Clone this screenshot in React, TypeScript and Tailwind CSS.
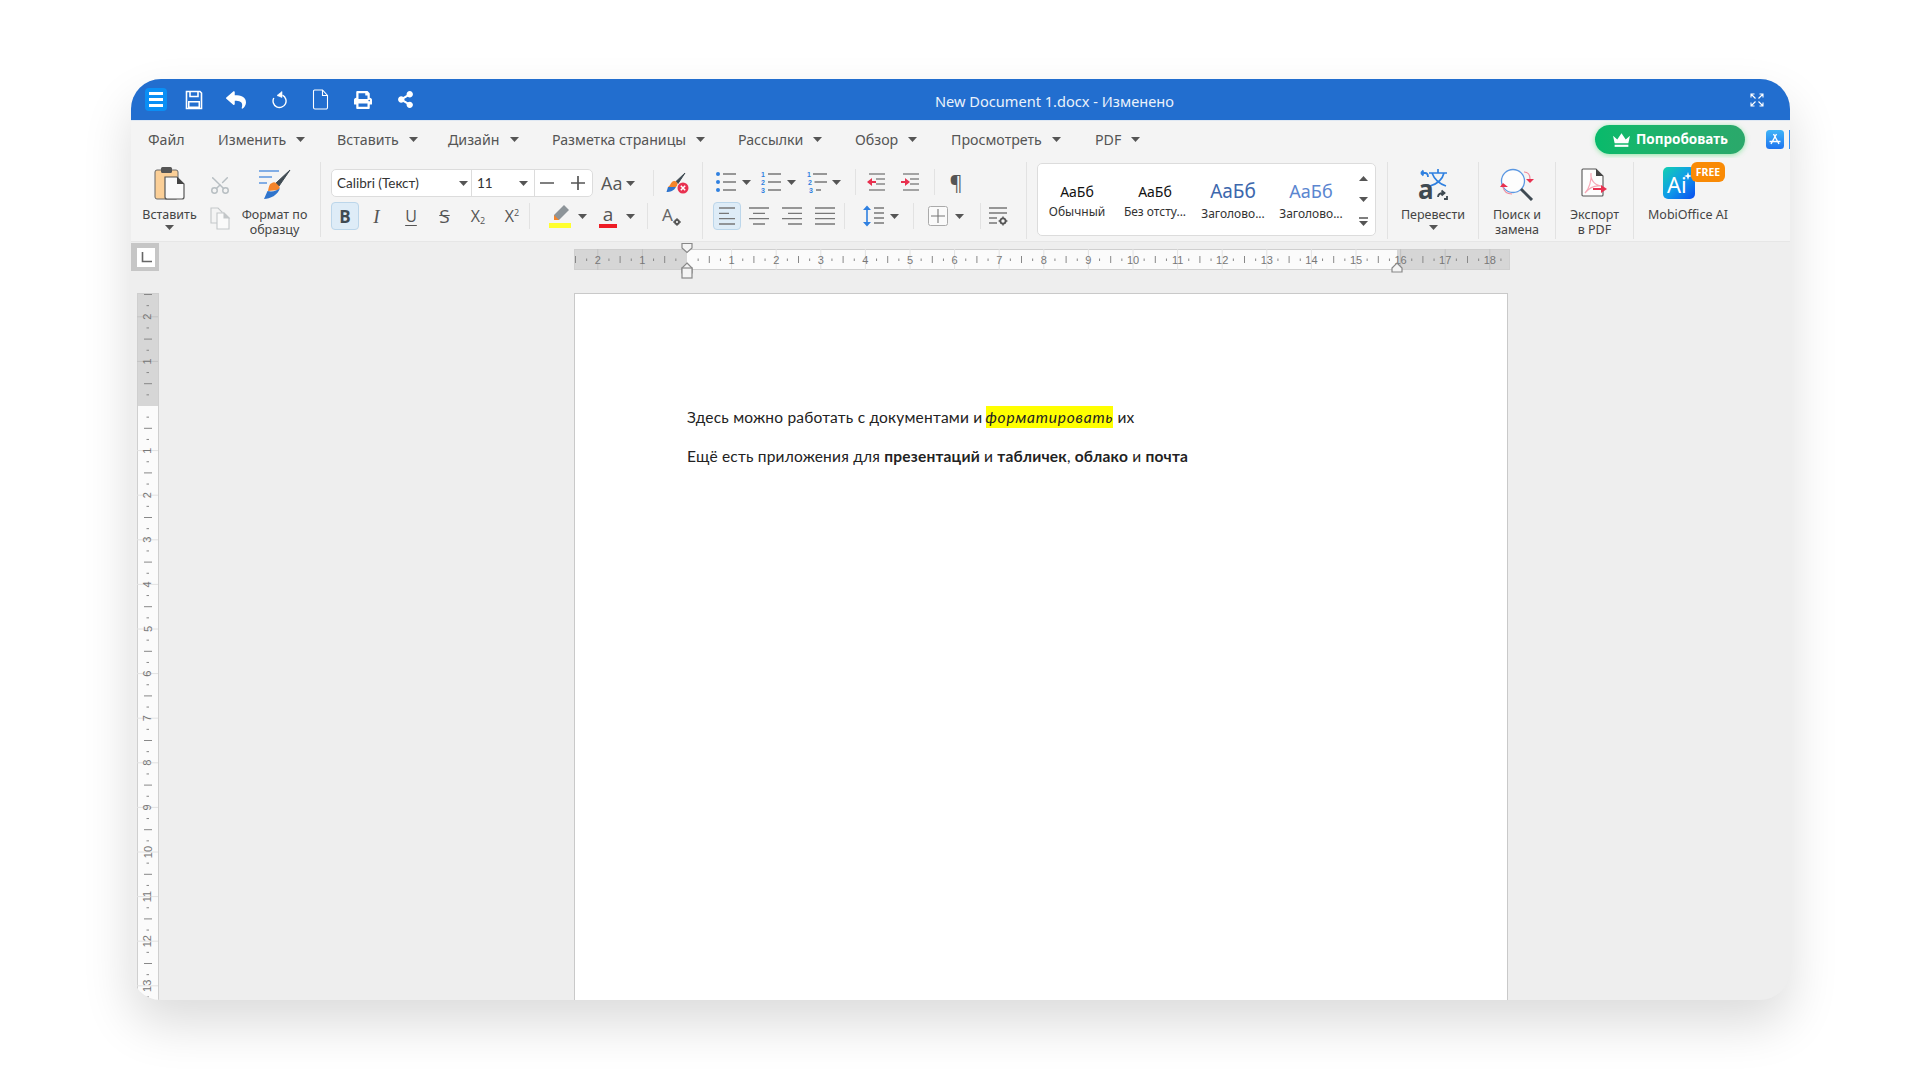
import React from "react";
import { FaReply, FaShareAlt, FaPrint } from "react-icons/fa";
import { Scissors } from "lucide-react";

const Caret = ({ className = "" }: { className?: string }) => (
  <svg width="9" height="5" viewBox="0 0 9 5" className={"shrink-0 " + className}>
    <polygon points="0,0 9,0 4.5,5" fill="#555" />
  </svg>
);
const Sep = ({ className = "" }: { className?: string }) => <div className={"w-px bg-[#e2e2e2] shrink-0 " + className} />;
const Cell = ({ className = "", children }: { className?: string; children?: React.ReactNode }) => (
  <div className={"flex items-center justify-center shrink-0 " + className}>{children}</div>
);

const Save = () => (
  <svg width="18" height="20" viewBox="0 0 18 20" fill="none" stroke="#fff" strokeWidth="1.6">
    <path d="M1.5 1.5H15L16.5 3V18.5H1.5Z" />
    <path d="M5 1.5V6.5H13V1.5" />
    <rect x="3" y="11" width="12" height="7" fill="#fff" stroke="none" />
    <rect x="4.5" y="12.5" width="9" height="4" fill="#226ecf" stroke="none" />
  </svg>
);
const Redo = () => (
  <svg width="18" height="20" viewBox="0 0 18 20" fill="none" stroke="#fff" strokeWidth="1.4">
    <path d="M13.5 5.2A6.5 6.5 0 1 1 4.8 8" />
    <path d="M13 1.5V7.5L8 5.5Z" fill="#fff" stroke="#fff" strokeWidth="0.6" />
  </svg>
);
const NewDoc = () => (
  <svg width="17" height="21" viewBox="0 0 17 21" fill="none" stroke="#fff" strokeWidth="1.1">
    <path d="M2.5 1H10.5L15.5 6.5V18.5A1.5 1.5 0 0 1 14 20H3A1.5 1.5 0 0 1 1.5 18.5V2A1 1 0 0 1 2.5 1Z" />
    <path d="M10.5 1V6.5H15.5" />
  </svg>
);
const Expand = () => (
  <svg width="14" height="14" viewBox="0 0 14 14" fill="none" stroke="#fff" strokeWidth="1.1">
    <path d="M1 4.5V1H4.5M1 1L5.5 5.5M9.5 1H13V4.5M13 1L8.5 5.5M1 9.5V13H4.5M1 13L5.5 8.5M13 9.5V13H9.5M13 13L8.5 8.5" />
  </svg>
);
const Crown = () => (
  <svg width="19" height="16" viewBox="0 0 18 15" fill="#fff">
    <path d="M1 3.5L5 7L9 1L13 7L17 3.5L15.5 10.5H2.5Z" />
    <rect x="2.5" y="12" width="13" height="2" />
  </svg>
);
const AppStore = () => (
  <svg width="18" height="19" viewBox="0 0 18 19">
    <defs>
      <linearGradient id="as" x1="0" y1="0" x2="0" y2="1">
        <stop offset="0" stopColor="#3fb4f8" />
        <stop offset="1" stopColor="#1f74ee" />
      </linearGradient>
    </defs>
    <rect width="18" height="19" rx="3.5" fill="url(#as)" />
    <path d="M10.5 4L5 14M7.5 4L13 14M3.5 11.5H14.5" stroke="#fff" strokeWidth="1.4" fill="none" />
  </svg>
);
const Paste = () => (
  <svg width="31" height="34" viewBox="0 0 31 34">
    <rect x="1" y="4" width="23" height="29" rx="2" fill="#fbcf97" stroke="#666" strokeWidth="1" />
    <rect x="7" y="1" width="11" height="6" rx="1.5" fill="#555" />
    <path d="M11 11H23L30 18V31A2 2 0 0 1 28 33H13A2 2 0 0 1 11 31Z" fill="#fafafa" stroke="#555" strokeWidth="1.2" />
    <path d="M23 11V18H30Z" fill="#444" />
  </svg>
);
const Copy = () => (
  <svg width="22" height="24" viewBox="0 0 22 24" fill="none" stroke="#c3c7c9" strokeWidth="1.1">
    <path d="M2 2H9L13 6V17H2Z" fill="#f4f4f4" />
    <path d="M8 7H15L20 12V23H8Z" fill="#fafafa" />
    <path d="M15 7V12H20Z" fill="#c3c7c9" />
  </svg>
);
const Painter = () => (
  <svg width="34" height="32" viewBox="0 0 34 32">
    <path d="M1 3H21M1 9H14M1 15H9" stroke="#5b95e0" strokeWidth="1.4" />
    <path d="M32 2L18 15L21 18Z" fill="#3f4a52" stroke="#3f4a52" strokeWidth="1" />
    <path d="M14 15C11 16 11 19 10 23L20 22C22 20 22 19 21 18L18 15C17 14 15 14 14 15Z" fill="#f5842a" />
    <path d="M9.5 23L6 31C12 31 20 27 22 20C19 23 14 24 9.5 23Z" fill="#2f74cc" />
  </svg>
);
const ClearFmt = () => (
  <svg width="24" height="22" viewBox="0 0 24 22">
    <path d="M20 1L11 9.5L13 11.5Z" fill="#3f4a52" stroke="#3f4a52" />
    <path d="M7 10C5 12 5 14 3 15L11 15C13 13 13 11 11 9.5C10 8.5 8 9 7 10Z" fill="#f5842a" />
    <path d="M3 15L1.5 20C5 20 9 19 11 15Z" fill="#2f74cc" />
    <circle cx="18" cy="16" r="5.5" fill="#e8304f" />
    <path d="M15.8 13.8L20.2 18.2M20.2 13.8L15.8 18.2" stroke="#fff" strokeWidth="1.5" />
  </svg>
);
const Highlight = () => (
  <svg width="22" height="24" viewBox="0 0 22 24">
    <path d="M15 1L20 6L10 16H5V11Z" fill="#8d9499" />
    <path d="M5 11V16H10Z" fill="#f5842a" />
    <rect y="19" width="22" height="5" fill="#ffff2e" />
  </svg>
);
const Lines = ({ rows, stroke = "#777" }: { rows: [number, number][]; stroke?: string }) => (
  <svg width="22" height="22" viewBox="0 0 22 22" stroke={stroke} strokeWidth="1.3">
    {rows.map(([a, b], i) => (
      <path key={i} d={`M${a} ${3 + i * (16 / (rows.length - 1))}H${b}`} />
    ))}
  </svg>
);
const Bullets = () => (
  <svg width="22" height="22" viewBox="0 0 22 22">
    {[3, 11, 19].map((y) => (
      <g key={y}>
        <circle cx="3" cy={y} r="2" fill="#2f80e0" />
        <path d={`M8 ${y}H21`} stroke="#777" strokeWidth="1.3" />
      </g>
    ))}
  </svg>
);
const Numbered = ({ indent = false }: { indent?: boolean }) => (
  <svg width="22" height="22" viewBox="0 0 22 22">
    {[0, 1, 2].map((i) => (
      <g key={i}>
        <text x={indent ? 1 + i : 1} y={6 + i * 8} fontSize="7" fontWeight="700" fontFamily="'Liberation Sans',sans-serif" fill="#2f80e0">{i + 1}</text>
        <path d={`M${indent ? 7 + i * 1.5 : 8} ${3 + i * 8}H${indent && i === 2 ? 15 : 21}`} stroke="#777" strokeWidth="1.3" />
      </g>
    ))}
  </svg>
);
const Indent = ({ out = false }: { out?: boolean }) => (
  <svg width="20" height="20" viewBox="0 0 20 20">
    <path d="M3 2H19M10 7H19M10 12H19M3 18H19" stroke="#888" strokeWidth="1.3" fill="none" />
    {out ? (
      <path d="M1 10L6 6V9H10V11H6V14Z" fill="#e8304f" />
    ) : (
      <path d="M10 10L5 6V9H1V11H5V14Z" fill="#e8304f" />
    )}
  </svg>
);
const Spacing = () => (
  <svg width="22" height="22" viewBox="0 0 22 22">
    <path d="M4 3V19" stroke="#2f80e0" strokeWidth="1.6" />
    <path d="M4 0.5L8 5H0ZM4 21.5L8 17H0Z" fill="#2f80e0" />
    <path d="M11 3H21M11 8H21M11 13H21M11 18H21" stroke="#777" strokeWidth="1.3" />
  </svg>
);
const Borders = () => (
  <svg width="20" height="20" viewBox="0 0 20 20">
    <rect x="0.5" y="0.5" width="19" height="19" rx="2" fill="#fafafa" stroke="#aaa" />
    <path d="M10 3V17M3 10H17" stroke="#777" strokeWidth="1.1" />
  </svg>
);
const Gear = ({ x, y, r = 2.6 }: { x: number; y: number; r?: number }) => (
  <g>
    <circle cx={x} cy={y} r={r} fill="none" stroke="#555" strokeWidth="1.8" />
    <path d={`M${x} ${y - r - 1.8}V${y - r}M${x} ${y + r}V${y + r + 1.8}M${x - r - 1.8} ${y}H${x - r}M${x + r} ${y}H${x + r + 1.8}`} stroke="#555" strokeWidth="1.4" />
  </g>
);
const ParaSet = () => (
  <svg width="22" height="22" viewBox="0 0 22 22">
    <path d="M2 3H20M2 8H20M2 13H10M2 18H10" stroke="#777" strokeWidth="1.3" />
    <Gear x={16} y={16} />
  </svg>
);
const FontSet = () => (
  <svg width="24" height="24" viewBox="0 0 24 24">
    <text x="3" y="17" fontSize="17" fontFamily="'Noto Sans',sans-serif" fill="#666">A</text>
    <Gear x={18} y={18} r={2} />
  </svg>
);
const Translate = () => (
  <svg width="30" height="32" viewBox="0 0 30 32">
    <path d="M7 5H3M3 5L5.5 2.5M3 5L5.5 7.5" stroke="#2f80e0" strokeWidth="1.8" fill="none" />
    <path d="M7 5C10 5 10 8 10 9" stroke="#2f80e0" strokeWidth="1.8" fill="none" />
    <path d="M11 5H29M20 1V5M14 5C17 13 22 16 28 18M26 5C24 13 19 16 12 18" stroke="#2f80e0" strokeWidth="1.7" fill="none" />
    <text x="0" y="31" fontSize="26" fontWeight="700" fontFamily="'Noto Sans',sans-serif" fill="#3f4a52">a</text>
    <path d="M20 29C20 26 23 25 26 25M23.5 22.5L26.5 25L23.5 27.5" stroke="#3f4a52" strokeWidth="1.8" fill="none" />
    <path d="M26 31H29V28" stroke="#3f4a52" strokeWidth="1.8" fill="none" />
  </svg>
);
const SearchIcon = () => (
  <svg width="34" height="33" viewBox="0 0 34 33">
    <circle cx="13" cy="13" r="11.5" fill="#fdfdfd" stroke="#5a97e2" strokeWidth="1.3" />
    <path d="M21 21L32 32" stroke="#3f4a52" strokeWidth="3" />
    <path d="M24 4C28 4 30 7 30 11" stroke="#f08a9c" strokeWidth="1.2" fill="none" />
    <path d="M26 11H34L30 15Z" fill="#e8304f" />
    <path d="M3 19C4 24 8 26 12 26" stroke="#f08a9c" strokeWidth="1.2" fill="none" />
    <path d="M3 15L8 19H0Z" fill="#e8304f" />
  </svg>
);
const PdfIcon = () => (
  <svg width="27" height="29" viewBox="0 0 27 29">
    <path d="M2 1H15L22 8V27A1 1 0 0 1 21 28H2A1 1 0 0 1 1 27V2A1 1 0 0 1 2 1Z" fill="#fdfdfd" stroke="#555" strokeWidth="1.1" />
    <path d="M15 1L22 8H15Z" fill="#444" />
    <path d="M4 25C8 21 11 12 10 5C9 11 13 17 20 18C13 17 8 20 4 25Z" fill="none" stroke="#f6a8b6" strokeWidth="1.2" />
    <path d="M12 20H20V17L26 21L20 25V22H12Z" fill="#e8304f" />
  </svg>
);
const AiIcon = () => (
  <svg width="32" height="32" viewBox="0 0 32 32">
    <defs>
      <linearGradient id="ai" x1="0" y1="0" x2="1" y2="1">
        <stop offset="0" stopColor="#12d0b0" />
        <stop offset="0.5" stopColor="#0f9ce8" />
        <stop offset="1" stopColor="#0a4cf0" />
      </linearGradient>
    </defs>
    <rect width="32" height="32" rx="5" fill="url(#ai)" />
    <text x="4" y="26" fontSize="22" fontFamily="'Noto Sans',sans-serif" fill="#fff">Ai</text>
    <path d="M25 5L26 8L29 9L26 10L25 13L24 10L21 9L24 8Z" fill="#fff" />
  </svg>
);

const HRuler = () => {
  const ticks = [];
  for (let i = -10; i <= 73; i++) {
    const x = 113 + i * 11.15;
    if (i === 0) continue;
    if (i % 4 === 0) {
      ticks.push(
        <g key={i}>
          <path d={`M${x} 0V21`} stroke={i < 0 || i > 63 ? "#c2c2c2" : "#e2e2e2"} />
          <text x={x} y="14.5" fontSize="11" textAnchor="middle" fontFamily="'Liberation Sans',sans-serif" fill="#777">{Math.abs(i / 4)}</text>
        </g>
      );
    } else if (i % 2 === 0) ticks.push(<path key={i} d={`M${x} 7V14`} stroke="#888" />);
    else ticks.push(<path key={i} d={`M${x} 9.5V12`} stroke="#888" />);
  }
  return (
    <svg width="936" height="21" viewBox="0 0 936 21" className="block overflow-visible">
      <rect width="936" height="21" fill="#d6d6d6" />
      <rect x="113" width="710" height="21" fill="#fbfbfb" />
      <rect x="0.5" y="0.5" width="935" height="20" fill="none" stroke="#cfcfcf" />
      {ticks}
      <path d="M108 -5.5H118V-1L113 3.5L108 -1Z" fill="#f4f4f4" stroke="#888" strokeWidth="1.2" />
      <path d="M113 14L118 19V24H108V19Z" fill="#f4f4f4" stroke="#888" strokeWidth="1.2" />
      <rect x="108" y="19" width="10" height="10" fill="#f4f4f4" stroke="#888" strokeWidth="1.2" />
      <path d="M823 14L828 19V23H818V19Z" fill="#f4f4f4" stroke="#888" strokeWidth="1.2" />
    </svg>
  );
};

const VRuler = () => {
  const ticks = [];
  for (let i = -10; i <= 54; i++) {
    const y = 113 + i * 11.15;
    if (i === 0) continue;
    if (i % 4 === 0) {
      ticks.push(
        <g key={i}>
          <path d={`M0 ${y}H21`} stroke={i < 0 ? "#c2c2c2" : "#e2e2e2"} />
          <text x="10.5" y={y + 4} fontSize="11" textAnchor="middle" fontFamily="'Liberation Sans',sans-serif" fill="#777" transform={`rotate(-90 10.5 ${y})`}>{Math.abs(i / 4)}</text>
        </g>
      );
    } else if (i % 2 === 0) ticks.push(<path key={i} d={`M7 ${y}H15`} stroke="#888" />);
    else ticks.push(<path key={i} d={`M9.5 ${y}H12`} stroke="#888" />);
  }
  return (
    <svg width="22" height="707" viewBox="0 0 22 707" className="block shrink-0">
      <rect width="22" height="707" fill="#fbfbfb" />
      <rect width="22" height="113" fill="#d6d6d6" />
      <rect x="0.5" y="0.5" width="21" height="720" fill="none" stroke="#cfcfcf" />
      {ticks}
    </svg>
  );
};

const menu: [string, string][] = [
  ["Изменить", "w-[119px]"],
  ["Вставить", "w-[111px]"],
  ["Дизайн", "w-[104px]"],
  ["Разметка страницы", "w-[186px]"],
  ["Рассылки", "w-[117px]"],
  ["Обзор", "w-[96px]"],
  ["Просмотреть", "w-[144px]"],
  ["PDF", "w-[60px]"],
];

const Style = ({ sample, label, className, labelClass = "mt-[2px]" }: { sample: string; label: string; className: string; labelClass?: string }) => (
  <div className="w-[78px] shrink-0 h-full flex flex-col items-center pt-[16px]">
    <div className={"h-[22px] flex items-center whitespace-nowrap " + className}>{sample}</div>
    <div className={"text-[12px] leading-[16px] text-[#333] whitespace-nowrap " + labelClass}>{label}</div>
  </div>
);

export default function App() {
  return (
    <div className="w-[1920px] h-[1080px] bg-white overflow-hidden pt-[79px] pl-[131px] font-['Noto_Sans',sans-serif]">
      <div className="w-[1659px] h-[921px] rounded-[30px] overflow-hidden bg-[#eeeeee] shadow-[0_24px_50px_rgba(0,0,0,0.14)] flex flex-col">
        {/* title bar */}
        <div className="h-[42px] bg-[#226ecf] flex items-center pl-[14px] shrink-0 border-b border-[#dfe8f3]">
          <div className="w-[22px] h-[23px] rounded-[4px] bg-[#0a8ff5] flex flex-col items-center justify-center gap-[3px] shrink-0">
            <div className="w-[14px] h-[3px] bg-white" />
            <div className="w-[14px] h-[3px] bg-white" />
            <div className="w-[14px] h-[3px] bg-white" />
          </div>
          <Cell className="w-[18px] ml-[18px]"><Save /></Cell>
          <Cell className="w-[24px] ml-[21px]"><FaReply className="text-white" size={20} /></Cell>
          <Cell className="w-[18px] ml-[21px]"><Redo /></Cell>
          <Cell className="w-[18px] ml-[24px]"><NewDoc /></Cell>
          <Cell className="w-[18px] ml-[25px]"><FaPrint className="text-white" size={18} /></Cell>
          <Cell className="w-[18px] ml-[24px]"><FaShareAlt className="text-white" size={17} /></Cell>
          <div className="ml-[521px] mt-[4px] text-[14.6px] text-[#eaf2fb] whitespace-nowrap">New Document 1.docx - Изменено</div>
          <div className="ml-auto mr-[26px]"><Expand /></div>
        </div>

        {/* menu bar */}
        <div className="h-[37px] bg-[#f4f4f4] flex items-center pl-[17px] text-[14.2px] text-[#555] shrink-0">
          <div className="w-[70px] shrink-0">Файл</div>
          {menu.map(([t, w]) => (
            <div key={t} className={"flex items-center gap-[10px] whitespace-nowrap shrink-0 " + w}>
              {t}
              <Caret />
            </div>
          ))}
          <div className="ml-[440px] w-[150px] h-[29px] rounded-full bg-gradient-to-r from-[#07ba6b] to-[#2ba86b] shadow-[0_1px_5px_rgba(60,220,100,0.55)] flex items-center justify-center gap-[5px] text-[13.5px] font-bold text-white shrink-0">
            <Crown />
            Попробовать
          </div>
          <div className="ml-[21px] shrink-0"><AppStore /></div>
          <div className="ml-[5px] w-[2px] h-[19px] bg-[#2d8cf5] shrink-0" />
        </div>

        {/* ribbon */}
        <div className="h-[84px] bg-[#f4f4f4] border-b border-[#e6e6e6] flex text-[12.5px] leading-[15px] text-[#444] shrink-0">
          <div className="w-[190px] flex pl-[6px] shrink-0 border-r border-[#e2e2e2] my-[4px]">
            <div className="w-[65px] flex flex-col items-center pt-[4px] shrink-0">
              <div className="h-[41px]"><Paste /></div>
              <div>Вставить</div>
              <Caret className="mt-[3px]" />
            </div>
            <div className="w-[35px] flex flex-col items-center pt-[12px] shrink-0">
              <Scissors size={22} strokeWidth={1.6} className="text-[#b7bec2] -rotate-90" />
              <div className="mt-[10px]"><Copy /></div>
            </div>
            <div className="w-[75px] flex flex-col items-center pt-[6px] shrink-0">
              <div className="h-[39px]"><Painter /></div>
              <div className="text-center whitespace-nowrap">Формат по<br />образцу</div>
            </div>
          </div>

          {/* font group */}
          <div className="w-[381px] pl-[10px] pt-[11px] flex flex-col gap-[5px] shrink-0">
            <div className="h-[28px] flex items-center">
              <div className="w-[262px] h-[28px] bg-white rounded-[5px] border border-[#dcdcdc] flex items-center shrink-0">
                <div className="w-[140px] h-full flex items-center justify-between pl-[5px] pr-[3px] pt-[1px] border-r border-[#dcdcdc] font-['Lato','Open_Sans',sans-serif] text-[13.5px] text-[#333]">
                  Calibri (Текст)
                  <Caret />
                </div>
                <div className="w-[63px] h-full flex items-center justify-between pl-[5px] pr-[6px] pt-[1px] border-r border-[#dcdcdc] font-['Lato','Open_Sans',sans-serif] text-[13.5px] text-[#333]">
                  11
                  <Caret />
                </div>
                <div className="flex-1 flex items-center pl-[4px] gap-[15px]">
                  <svg width="16" height="16" viewBox="0 0 16 16"><path d="M1 8H15" stroke="#555" strokeWidth="1.7" /></svg>
                  <svg width="16" height="16" viewBox="0 0 16 16"><path d="M1 8H15M8 1V15" stroke="#555" strokeWidth="1.7" /></svg>
                </div>
              </div>
              <div className="w-[60px] flex items-center pl-[8px] gap-[4px] text-[18px] leading-[24px] text-[#555] shrink-0 font-['Open_Sans',sans-serif]">Aa<Caret /></div>
              <Sep className="h-[26px]" />
              <Cell className="w-[46px]"><ClearFmt /></Cell>
            </div>
            <div className="h-[28px] flex items-center text-[#555]">
              <div className="w-[28px] h-[28px] rounded-[4px] bg-[#deecf7] border border-[#bcd6ea] flex items-center justify-center text-[17px] font-bold text-[#3f4a52] font-['Open_Sans',sans-serif] shrink-0">B</div>
              <Cell className="w-[35px] text-[19px] italic font-['Liberation_Serif',serif]">I</Cell>
              <Cell className="w-[34px] text-[16px] underline underline-offset-[3px] font-['Open_Sans',sans-serif]">U</Cell>
              <Cell className="w-[33px] text-[19px] line-through font-['Open_Sans',sans-serif]">S</Cell>
              <Cell className="w-[34px] text-[16px] font-['Open_Sans',sans-serif]">X<span className="text-[9px] mt-[8px]">2</span></Cell>
              <Cell className="w-[34px] text-[16px] font-['Open_Sans',sans-serif]">X<span className="text-[9px] mb-[8px]">2</span></Cell>
              <Sep className="h-[26px]" />
              <div className="w-[69px] flex items-center pl-[19px] shrink-0">
                <Highlight />
                <Caret className="ml-[7px]" />
              </div>
              <div className="w-[48px] flex items-center shrink-0">
                <div className="w-[18px] flex flex-col items-center">
                  <div className="text-[19px] leading-[18px] text-[#555] font-['Open_Sans',sans-serif]">a</div>
                  <div className="w-[18px] h-[4px] bg-[#ee1c25] mt-[1px]" />
                </div>
                <Caret className="ml-[9px]" />
              </div>
              <Sep className="h-[26px]" />
              <Cell className="w-[46px]"><FontSet /></Cell>
            </div>
          </div>

          {/* paragraph group */}
          <Sep className="h-[77px] mt-[4px]" />
          <div className="w-[323px] pt-[11px] flex flex-col gap-[5px] shrink-0">
            <div className="h-[28px] flex items-center pl-[12px] -mt-[1px] mb-[1px]">
              <Bullets /><Caret className="ml-[5px]" />
              <div className="ml-[9px]"><Numbered /></div><Caret className="ml-[5px]" />
              <div className="ml-[10px]"><Numbered indent /></div><Caret className="ml-[4px]" />
              <Sep className="h-[26px] ml-[14px]" />
              <div className="ml-[10px]"><Indent out /></div>
              <div className="ml-[14px]"><Indent /></div>
              <Sep className="h-[26px] ml-[14px]" />
              <Cell className="w-[22px] ml-[10px] text-[20px] text-[#555] font-['Open_Sans',sans-serif]">¶</Cell>
            </div>
            <div className="h-[28px] flex items-center pl-[10px]">
              <div className="w-[28px] h-[28px] rounded-[4px] bg-[#deecf7] border border-[#bcd6ea] flex items-center justify-center shrink-0">
                <Lines rows={[[3, 19], [3, 13], [3, 19], [3, 19]]} />
              </div>
              <div className="ml-[7px]"><Lines rows={[[1, 21], [5, 17], [1, 21], [5, 17]]} /></div>
              <div className="ml-[11px]"><Lines rows={[[1, 21], [7, 21], [1, 21], [7, 21]]} /></div>
              <div className="ml-[11px]"><Lines rows={[[1, 21], [1, 21], [1, 21], [1, 21]]} /></div>
              <Sep className="h-[26px] ml-[8px]" />
              <div className="ml-[18px]"><Spacing /></div><Caret className="ml-[5px]" />
              <Sep className="h-[26px] ml-[14px]" />
              <div className="ml-[14px]"><Borders /></div><Caret className="ml-[7px]" />
              <Sep className="h-[26px] ml-[16px]" />
              <div className="ml-[6px]"><ParaSet /></div>
            </div>
          </div>

          {/* styles */}
          <Sep className="h-[77px] mt-[4px]" />
          <div className="w-[360px] pl-[10px] pt-[5px] shrink-0">
            <div className="w-[339px] h-[73px] bg-white rounded-[5px] border border-[#dcdcdc] flex">
              <Style sample="АаБб" label="Обычный" className="text-[14px] text-[#111]" />
              <Style sample="АаБб" label="Без отсту..." className="text-[14px] text-[#111]" />
              <Style sample="АаБб" label="Заголово..." labelClass="mt-[4px]" className="text-[19px] text-[#3c67ad]" />
              <Style sample="АаБб" label="Заголово..." labelClass="mt-[4px]" className="text-[18px] text-[#5b86d0]" />
              <div className="flex-1 flex flex-col items-center justify-between pt-[12px] pb-[9px] pl-[2px]">
                <svg width="9" height="5" viewBox="0 0 9 5"><polygon points="0,5 9,5 4.5,0" fill="#555" /></svg>
                <svg width="9" height="5" viewBox="0 0 9 5"><polygon points="0,0 9,0 4.5,5" fill="#555" /></svg>
                <svg width="9" height="9" viewBox="0 0 9 9"><path d="M0 1H9" stroke="#555" strokeWidth="1.5" /><polygon points="0,4 9,4 4.5,9" fill="#555" /></svg>
              </div>
            </div>
          </div>

          {/* big buttons */}
          <Sep className="h-[77px] mt-[4px]" />
          <div className="w-[90px] flex flex-col items-center pt-[10px] shrink-0">
            <div className="h-[39px]"><Translate /></div>
            <div>Перевести</div>
            <Caret className="mt-[3px]" />
          </div>
          <Sep className="h-[77px] mt-[4px]" />
          <div className="w-[76px] flex flex-col items-center pt-[10px] shrink-0">
            <div className="h-[39px]"><SearchIcon /></div>
            <div className="text-center">Поиск и<br />замена</div>
          </div>
          <Sep className="h-[77px] mt-[4px]" />
          <div className="w-[77px] flex flex-col items-center pt-[10px] shrink-0">
            <div className="h-[39px]"><PdfIcon /></div>
            <div className="text-center">Экспорт<br />в PDF</div>
          </div>
          <Sep className="h-[77px] mt-[4px]" />
          <div className="w-[108px] flex flex-col items-center pt-[9px] shrink-0">
            <div className="h-[40px] w-[32px] relative mr-[18px]">
              <AiIcon />
              <div className="absolute left-[28px] top-[-5px] w-[34px] h-[20px] rounded-[6px] bg-[#f98a05] text-white text-[10.5px] font-bold flex items-center justify-center">FREE</div>
            </div>
            <div className="whitespace-nowrap">MobiOffice AI</div>
          </div>
        </div>

        {/* ruler row */}
        <div className="h-[51px] flex shrink-0 pt-[1px]">
          <div className="w-[28px] h-[28px] bg-[#c6c6c6] pl-[6px] pt-[5px] shrink-0">
            <div className="w-[18px] h-[19px] bg-white flex items-center justify-center">
              <svg width="11" height="11" viewBox="0 0 11 11" fill="none" stroke="#666" strokeWidth="1.6"><path d="M1.5 0V9.5H11" /></svg>
            </div>
          </div>
          <div className="ml-[415px] mt-[6px]"><HRuler /></div>
        </div>

        {/* document area */}
        <div className="flex-1 flex pl-[6px] min-h-0 overflow-hidden">
          <VRuler />
          <div className="ml-[415px] w-[934px] h-[800px] bg-white border border-[#c9c9c9] pl-[112px] pt-[112px] text-[#222] text-[15.5px] leading-[22px] tracking-[0.2px] font-['Lato','Open_Sans',sans-serif] shrink-0">
            <p>Здесь можно работать с документами и <span className="italic tracking-[0.8px] bg-[#ffff00] inline-block -ml-[1px]">форматировать</span> их</p>
            <p className="mt-[17px]">Ещё есть приложения для <b>презентаций</b> и <b>табличек</b>, <b>облако</b> и <b>почта</b></p>
          </div>
        </div>
      </div>
    </div>
  );
}
